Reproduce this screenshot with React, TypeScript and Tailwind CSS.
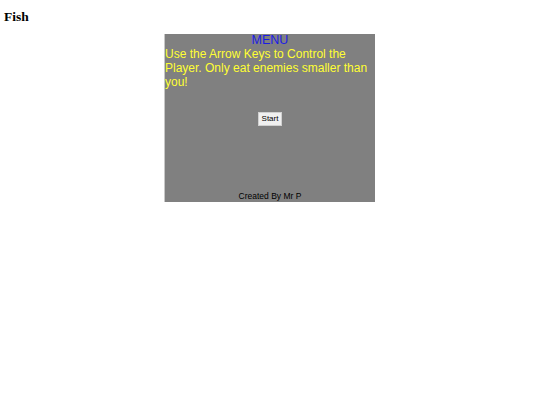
import React from 'react';

const App = () => {
  return (
    <div className="w-[540px] h-[405px] bg-white" style={{ fontFamily: '"Liberation Serif", serif' }}>
      <h1 className="px-[4px] pt-[9px] text-[13.5px] font-bold leading-[15px] text-black">Fish</h1>
      <div className="ml-[164px] mt-[10px] w-[211px] h-[168px] bg-[#808080] border-l border-[#c8c8c8] flex flex-col font-['Liberation_Sans',sans-serif]">
        <div className="text-center text-[12.5px] leading-[13px] text-[#1c1ce6]">MENU</div>
        <p className="text-[12px] leading-[14px] text-[#ffff33]">
          Use the Arrow Keys to Control the Player. Only eat enemies smaller than you!
        </p>
        <div className="flex justify-center mt-[23px]">
          <button className="bg-[#f0f0f0] text-black text-[8px] leading-[10px] px-[3px] py-[1px] border border-[#d0d0d0]">Start</button>
        </div>
        <div className="mt-auto text-center text-[8.5px] leading-[10px] text-black pb-[1px]">Created By Mr P</div>
      </div>
    </div>
  );
};

export default App;
